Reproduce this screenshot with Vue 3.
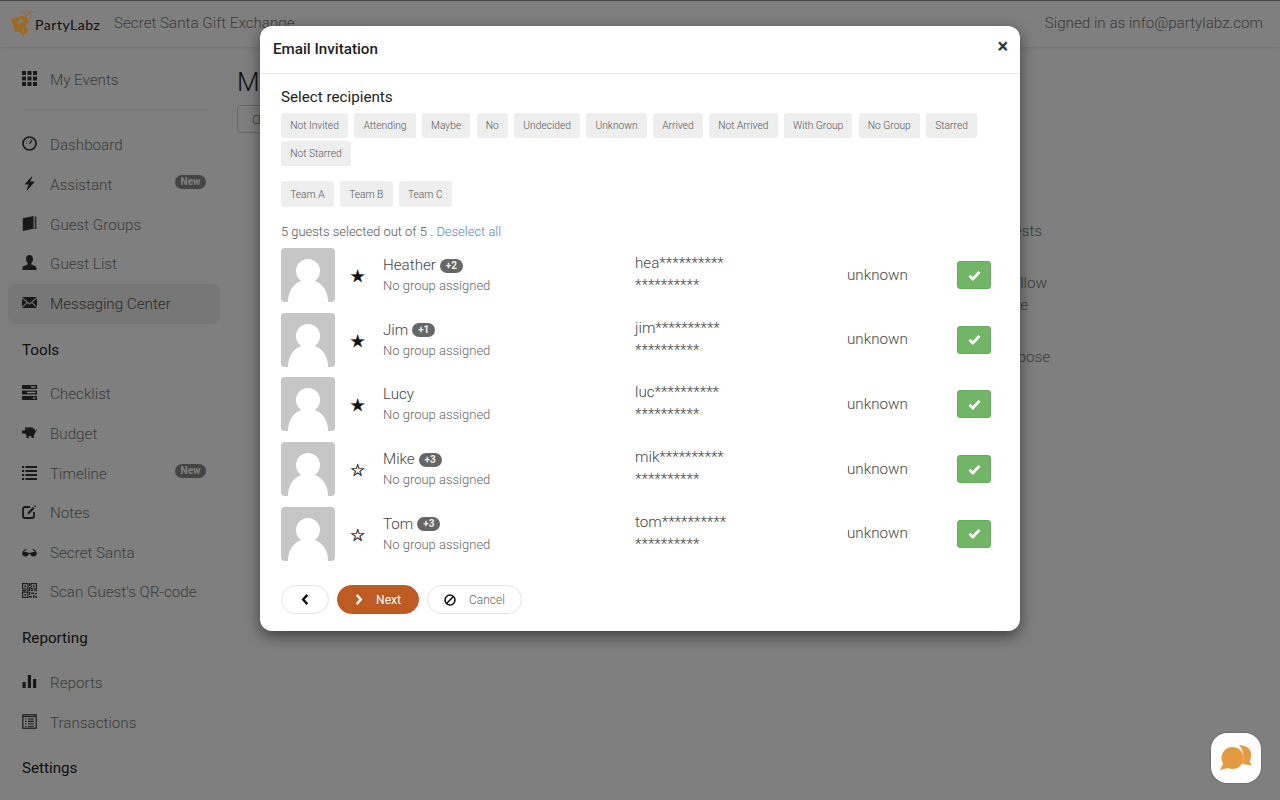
<script setup>
const nav = [
  { type: 'item', label: 'Dashboard', icon: 'dash' },
  { type: 'item', label: 'Assistant', icon: 'bolt', badge: 'New' },
  { type: 'item', label: 'Guest Groups', icon: 'book' },
  { type: 'item', label: 'Guest List', icon: 'user' },
  { type: 'item', label: 'Messaging Center', icon: 'mail', active: true },
  { type: 'head', label: 'Tools' },
  { type: 'item', label: 'Checklist', icon: 'tasks' },
  { type: 'item', label: 'Budget', icon: 'pig' },
  { type: 'item', label: 'Timeline', icon: 'list', badge: 'New' },
  { type: 'item', label: 'Notes', icon: 'edit' },
  { type: 'item', label: 'Secret Santa', icon: 'glasses' },
  { type: 'item', label: "Scan Guest's QR-code", icon: 'qr' },
  { type: 'head', label: 'Reporting' },
  { type: 'item', label: 'Reports', icon: 'bars' },
  { type: 'item', label: 'Transactions', icon: 'ledger' },
  { type: 'head', label: 'Settings' }
]
const filters = ['Not Invited', 'Attending', 'Maybe', 'No', 'Undecided', 'Unknown', 'Arrived', 'Not Arrived', 'With Group', 'No Group', 'Starred', 'Not Starred']
const teams = ['Team A', 'Team B', 'Team C']
const guests = [
  { name: 'Heather', plus: '+2', star: true, email: 'hea**********' },
  { name: 'Jim', plus: '+1', star: true, email: 'jim**********' },
  { name: 'Lucy', plus: '', star: true, email: 'luc**********' },
  { name: 'Mike', plus: '+3', star: false, email: 'mik**********' },
  { name: 'Tom', plus: '+3', star: false, email: 'tom**********' }
]
</script>

<template>
  <div class="page">
    <header class="topbar">
      <div class="brand">
        <svg class="logo" viewBox="0 0 24 28" width="24" height="28">
          <path fill="#9c6a22" d="M1 9.500 12 7c3.600-.6 6 1.400 6.200 4.600.2 3-1.600 5-4.600 5.600l-4.200.8L10 22l-5 1z" />
          <path fill="#7f7f7f" d="M7.600 11.400l3.600-.7c1.200-.2 2 .4 2.100 1.400.1 1.100-.6 1.800-1.700 2l-3.400.6z" />
          <circle cx="13.500" cy="21" r="4.400" fill="#9c6a22" />
          <path d="M13.500 25.400v2.400" stroke="#9c6a22" stroke-width="1" />
          <path d="M13.500 18.800v4.400" stroke="#7f7f7f" stroke-width="1" />
          <g fill="#9c6a22">
            <circle cx="11" cy="2" r="1" /><circle cx="14" cy="4" r="1" /><circle cx="17" cy="6" r="1.100" />
            <circle cx="20" cy="4" r="1.200" /><circle cx="16" cy="1.500" r=".7" /><circle cx="20" cy="9" r=".9" />
            <circle cx="23" cy="3" r=".8" /><circle cx="18" cy="11" r=".7" />
          </g>
        </svg>
        <span class="brand-name">PartyLabz</span>
      </div>
      <span class="event-name">Secret Santa Gift Exchange</span>
      <span class="signed">Signed in as info@partylabz.com</span>
    </header>

    <div class="shell">
      <aside class="sidebar">
        <div class="item">
          <svg class="ico" viewBox="0 0 15 15"><g fill="currentColor">
            <rect x="0" y="0" width="4" height="4" /><rect x="5.500" y="0" width="4" height="4" /><rect x="11" y="0" width="4" height="4" />
            <rect x="0" y="5.500" width="4" height="4" /><rect x="5.500" y="5.500" width="4" height="4" /><rect x="11" y="5.500" width="4" height="4" />
            <rect x="0" y="11" width="4" height="4" /><rect x="5.500" y="11" width="4" height="4" /><rect x="11" y="11" width="4" height="4" />
          </g></svg>
          <span>My Events</span>
        </div>
        <div class="divider"></div>
        <template v-for="n in nav" :key="n.label">
          <div v-if="n.type === 'head'" class="nav-head">{{ n.label }}</div>
          <div v-else class="item" :class="{ active: n.active }">
            <svg class="ico" viewBox="0 0 15 15">
              <g v-if="n.icon === 'dash'">
                <circle cx="7.500" cy="7.500" r="6.500" fill="none" stroke="currentColor" stroke-width="1.700" />
                <path d="M7.500 7.800 10 4.400" stroke="currentColor" stroke-width="1.300" fill="none" />
                <path d="M4 7h1M5.500 4.600h.8M8 3.600h.8" stroke="currentColor" stroke-width="1" fill="none" />
              </g>
              <path v-else-if="n.icon === 'bolt'" fill="currentColor" d="M10.500-.5 2.500 8.600h4L4.200 15.500 13 5.600H8.500z" />
              <g v-else-if="n.icon === 'book'" fill="currentColor">
                <path d="M.8 2.200 11.500 0v12.800L.8 15z" />
                <path d="M12.600.6h1.800v12.600h-1.800z" opacity=".8" />
              </g>
              <path v-else-if="n.icon === 'user'" fill="currentColor" d="M7.500 0C9.600 0 11 1.600 11 4c0 1.800-.8 3.400-1.700 4.300v1.200c1.900.8 5.200 1.600 5.200 3.500V15H.5v-2c0-1.900 3.300-2.700 5.200-3.500V8.300C4.800 7.400 4 5.800 4 4c0-2.400 1.400-4 3.500-4z" />
              <path v-else-if="n.icon === 'mail'" fill="currentColor" fill-rule="evenodd" d="M0 2h15L7.500 8.200zM0 3.600l4.600 3.700L0 11.700zM15 3.600v8.100l-4.600-4.400zM5.400 8l2.100 1.700L9.600 8l5.400 5H0z" />
              <g v-else-if="n.icon === 'tasks'" fill="currentColor">
                <path fill-rule="evenodd" d="M0 0h15v4H0zM9 1.300v1.400h4.500V1.300z" />
                <path fill-rule="evenodd" d="M0 5.500h15v4H0zM5 6.800v1.400h8.500V6.800z" />
                <path fill-rule="evenodd" d="M0 11h15v4H0zM11 12.300v1.400h2.500v-1.400z" />
              </g>
              <g v-else-if="n.icon === 'pig'" fill="currentColor">
                <ellipse cx="8" cy="6.800" rx="5.500" ry="4.500" />
                <rect x="4.500" y="9.500" width="2.300" height="3.500" />
                <rect x="9.500" y="9.500" width="2.300" height="3.500" />
                <path d="M0 5.500h3v3H0zM3 1.500 5.500 3 3.500 4.500zM13 6l2-1.800.4.4L13.500 7z" />
              </g>
              <g v-else-if="n.icon === 'list'" fill="currentColor">
                <rect x="0" y="1" width="2.200" height="2" /><rect x="3.500" y="1" width="11.500" height="2" />
                <rect x="0" y="5" width="2.200" height="2" /><rect x="3.500" y="5" width="11.500" height="2" />
                <rect x="0" y="9" width="2.200" height="2" /><rect x="3.500" y="9" width="11.500" height="2" />
                <rect x="0" y="13" width="2.200" height="2" /><rect x="3.500" y="13" width="11.500" height="2" />
              </g>
              <g v-else-if="n.icon === 'edit'">
                <path d="M8 3H3a2 2 0 0 0-2 2v7a2 2 0 0 0 2 2h7a2 2 0 0 0 2-2V8" fill="none" stroke="currentColor" stroke-width="1.800" />
                <path fill="currentColor" d="M5.500 10.500 6 8l5-5 1.600 1.600-5 5zM12.300 1.500h1.600v1.600h-1.600z" />
              </g>
              <g v-else-if="n.icon === 'glasses'" fill="currentColor">
                <path d="M.2 9.600C.2 7.500 2.500 5.200 4.200 5l.3 1C3.200 6.400 2.200 7.300 1.800 8.200c1.500-.3 3.800-.2 4.700.8v1.200c0 1.300-1 2.300-3 2.300S.2 11.200.2 9.600zM14.800 9.600C14.800 7.500 12.500 5.200 10.800 5l-.3 1c1.300.4 2.300 1.300 2.700 2.200-1.500-.3-3.800-.2-4.700.8v1.200c0 1.300 1 2.300 3 2.300s3.300-1.300 3.300-2.900z" />
                <rect x="6" y="8.800" width="3" height="1.200" />
              </g>
              <g v-else-if="n.icon === 'qr'">
                <g fill="none" stroke="currentColor" stroke-width="1.100">
                  <rect x=".6" y=".6" width="5.300" height="5.300" /><rect x="9.100" y=".6" width="5.300" height="5.300" /><rect x=".6" y="9.100" width="5.300" height="5.300" />
                </g>
                <g fill="currentColor">
                  <rect x="2.400" y="2.400" width="1.700" height="1.700" /><rect x="10.900" y="2.400" width="1.700" height="1.700" /><rect x="2.400" y="10.900" width="1.700" height="1.700" />
                  <rect x="7" y="0" width="1.200" height="3" /><rect x="7" y="4" width="1.200" height="3" /><rect x="0" y="7" width="4" height="1.200" /><rect x="5" y="7" width="3" height="1.200" />
                  <rect x="9" y="7" width="2" height="1.200" /><rect x="12.500" y="7" width="2.500" height="1.200" /><rect x="7" y="9" width="1.200" height="3" /><rect x="9" y="9.500" width="3" height="1.200" />
                  <rect x="12.500" y="10" width="2.500" height="1.200" /><rect x="7" y="13" width="3" height="1.500" /><rect x="11" y="12" width="1.400" height="3" /><rect x="13.500" y="13" width="1.500" height="2" />
                </g>
              </g>
              <g v-else-if="n.icon === 'bars'" fill="currentColor">
                <rect x=".5" y="8" width="3.200" height="6" /><rect x="5.800" y="1" width="3.200" height="13" /><rect x="11" y="5" width="3.200" height="9" />
              </g>
              <g v-else-if="n.icon === 'ledger'">
                <rect x=".8" y=".8" width="13.400" height="13.400" fill="none" stroke="currentColor" stroke-width="1.200" />
                <path d="M1 2.600h13" stroke="currentColor" stroke-width="1" />
                <path d="M3 5h1.500M6 5h6M3 7.400h1.500M6 7.400h6M3 9.800h1.500M6 9.800h6M3 12.200h1.500M6 12.200h6" stroke="currentColor" stroke-width="1.100" fill="none" />
              </g>
            </svg>
            <span>{{ n.label }}</span>
            <span v-if="n.badge" class="new">{{ n.badge }}</span>
          </div>
        </template>
      </aside>

      <main class="main">
        <h1 class="title">Messaging Center</h1>
        <button class="outline">Options</button>
        <div class="note">
          <p class="n1">Invite your guests</p>
          <p class="n2">and follow</p>
          <p class="n3">up here</p>
          <p class="n4">for this purpose</p>
        </div>
      </main>
    </div>

    <div class="overlay">
      <section class="modal">
        <div class="m-head">
          <h2>Email Invitation</h2>
          <span class="close">×</span>
        </div>
        <div class="m-body">
          <h3>Select recipients</h3>
          <div class="chips">
            <span v-for="f in filters" :key="f" class="chip">{{ f }}</span>
          </div>
          <div class="chips teams">
            <span v-for="t in teams" :key="t" class="chip">{{ t }}</span>
          </div>
          <p class="status">5 guests selected out of 5 . <a>Deselect all</a></p>
          <ul class="guests">
            <li v-for="g in guests" :key="g.name" class="guest">
              <svg class="avatar" viewBox="0 0 54 54" width="54" height="54">
                <rect width="54" height="54" rx="4" fill="#c6c6c6" />
                <circle cx="27" cy="23" r="12" fill="#fff" />
                <path fill="#fff" d="M7 54c0-13 8-22 20-22s20 9 20 22z" />
              </svg>
              <span class="star">{{ g.star ? '★' : '☆' }}</span>
              <div class="who">
                <div class="name">{{ g.name }}<span v-if="g.plus" class="plus">{{ g.plus }}</span></div>
                <div class="group">No group assigned</div>
              </div>
              <div class="contact">
                <div class="mail">{{ g.email }}</div>
                <div class="phone">**********</div>
              </div>
              <span class="state">unknown</span>
              <span class="check">
                <svg viewBox="0 0 14 12" width="13" height="11"><path d="M1.500 6.200 5.200 9.800 12.500 2" fill="none" stroke="#fff" stroke-width="3" /></svg>
              </span>
            </li>
          </ul>
          <div class="actions">
            <button class="btn back">
              <svg viewBox="0 0 8 12" width="8" height="11"><path d="M6.500 1 2 6l4.500 5" fill="none" stroke="#111" stroke-width="2.600" /></svg>
            </button>
            <button class="btn next">
              <svg viewBox="0 0 8 12" width="8" height="11"><path d="M1.500 1 6 6l-4.500 5" fill="none" stroke="#fff" stroke-width="2.600" /></svg>
              <span>Next</span>
            </button>
            <button class="btn cancel">
              <svg viewBox="0 0 14 14" width="12" height="12"><circle cx="7" cy="7" r="5.800" fill="none" stroke="#111" stroke-width="1.800" /><path d="M3 11 11 3" stroke="#111" stroke-width="1.800" /></svg>
              <span>Cancel</span>
            </button>
          </div>
        </div>
      </section>
    </div>

    <div class="chat">
      <svg viewBox="0 0 34 26" width="34" height="26">
        <path fill="#e59a3f" d="M16 1c5 0 10 2.500 11.500 6 1 4 .5 7.500-1 10.500l2.500 4-8-1.200c-.8-.2-1.200-.3-2-.5 3-6 1-15-3-18.800z" transform="translate(4 -1)" />
        <circle cx="13.500" cy="13" r="11" fill="#e59a3f" />
        <path fill="#e59a3f" d="M5 17 1 25l10-2.500z" />
      </svg>
    </div>
  </div>
</template>

<style>
html, body { margin: 0; background: #fff; }
</style>

<style scoped>
.page {
  position: relative;
  width: 1280px;
  height: 800px;
  overflow: hidden;
  background: #fff;
  font-family: Roboto, "Liberation Sans", sans-serif;
  font-weight: 300;
  color: #777;
}
.topbar {
  height: 47px;
  box-sizing: border-box;
  display: flex;
  align-items: center;
  padding: 0 17px 2px 10px;
  border-top: 1px solid #888;
  box-shadow: 0 1px 3px rgba(0, 0, 0, .12);
  font-size: 15.200px;
  color: #777;
}
.brand { display: flex; align-items: center; width: 104px; }
.logo { flex: none; position: relative; z-index: 1; }
.brand-name {
  margin-left: 1px;
  margin-top: 3px;
  font-family: Lato, sans-serif;
  font-weight: 400;
  font-size: 14px;
  letter-spacing: .55px;
  color: #222;
}
.signed { margin-left: auto; }
.shell { display: flex; }
.sidebar { width: 220px; flex: none; padding: 13px 0 0 8px; box-sizing: border-box; }
.item {
  height: 39.600px;
  display: flex;
  align-items: center;
  padding: 0 14px;
  border-radius: 8px;
  font-size: 15.200px;
  color: #777;
}
.item.active { background: #eee; color: #555; }
.ico { width: 15px; height: 15px; margin-right: 13px; flex: none; color: #333; margin-top: -3px; }
.divider { height: 1px; background: #f0f0f0; margin: 9px 10px 16px 14px; }
.nav-head {
  height: 51px;
  line-height: 52px;
  padding-left: 14px;
  font-size: 15.200px;
  font-weight: 400;
  color: #222;
}
.new {
  margin-left: auto;
  margin-top: -5px;
  width: 31px;
  height: 14px;
  line-height: 14px;
  border-radius: 7px;
  background: #888;
  color: #fff;
  font-size: 10px;
  font-weight: 700;
  text-align: center;
}
.main { flex: 1; padding: 20px 0 0 17px; }
.title { margin: 0; font-size: 26px; line-height: 30px; font-weight: 300; color: #222; white-space: nowrap; }
.outline {
  display: block;
  margin-top: 8px;
  height: 28px;
  padding: 0 14px;
  background: #fff;
  border: 1px solid #ccc;
  border-radius: 4px;
  font: 300 13px Roboto, sans-serif;
  color: #777;
}
.note { width: 300px; margin: 87px 0 0 513px; font-size: 15.200px; line-height: 22px; text-align: right; color: #777; }
.note p { margin: 0; }
.n1 { padding-right: 8px; margin-bottom: 30px !important; }
.n2 { padding-right: 3px; }
.n3 { padding-right: 22px; margin-bottom: 30px !important; }
.overlay {
  position: absolute;
  inset: 0;
  background: rgba(0, 0, 0, .5);
  display: flex;
  justify-content: center;
  align-items: flex-start;
}
.modal {
  width: 760px;
  margin-top: 26px;
  background: #fff;
  border-radius: 12px;
  box-shadow: 0 5px 15px rgba(0, 0, 0, .5);
}
.m-head {
  height: 48px;
  box-sizing: border-box;
  border-bottom: 1px solid #e8e8e8;
  display: flex;
  align-items: center;
  justify-content: space-between;
  padding: 0 12px 0 13px;
}
.m-head h2 { margin: 0 0 1px; font-size: 15.200px; font-weight: 500; color: #222; }
.close { font-size: 20px; font-weight: 700; color: #333; line-height: 1; margin-top: -8px; }
.m-body { padding: 13px 29px 17px 21px; }
.m-body h3 { margin: 0; font-size: 15.200px; line-height: 20px; font-weight: 400; color: #222; }
.chips { display: flex; flex-wrap: wrap; gap: 3px 6.200px; margin-top: 6px; }
.teams { margin-top: 15px; }
.chip {
  height: 25px;
  line-height: 26px;
  padding: 0 9.200px;
  background: #eee;
  border-radius: 3px;
  font-size: 10.240px;
  color: #555;
}
.teams .chip { height: 26px; line-height: 27px; }
.status { margin: 15px 0 6px; font-size: 12.950px; line-height: 20px; color: #555; }
.status a { color: #5b84c4; }
.guests { list-style: none; margin: 0; padding: 0; display: flex; flex-direction: column; gap: 10.700px; }
.guest {
  display: grid;
  grid-template-columns: 54px 48px 252px 212px 110px 34px;
  align-items: center;
  height: 54px;
}
.avatar { display: block; }
.star {
  font-size: 17px;
  color: #111;
  justify-self: center;
  font-family: "DejaVu Sans", sans-serif;
  margin-top: 2px;
  margin-left: -3px;
  -webkit-text-stroke: .35px #111;
}
.name { font-size: 15.200px; line-height: 21px; color: #444; display: flex; align-items: center; margin-top: 1px; }
.plus {
  margin-left: 4px;
  width: 23px;
  height: 14px;
  line-height: 14px;
  border-radius: 7px;
  background: #666;
  color: #eee;
  font-size: 10px;
  font-weight: 700;
  text-align: center;
}
.group { font-size: 13px; line-height: 20px; color: #666; }
.contact { color: #444; }
.mail { font-size: 15.200px; line-height: 20px; margin-top: -2px; }
.phone { font-size: 15.200px; line-height: 20px; margin-top: 2px; }
.state { font-size: 15.200px; color: #444; margin-top: -1px; }
.check {
  width: 34px;
  height: 28px;
  box-sizing: border-box;
  border: 1px solid #5fb058;
  border-radius: 3px;
  background: #73b566;
  display: flex;
  align-items: center;
  justify-content: center;
}
.actions { display: flex; gap: 8px; margin-top: 24.400px; }
.btn {
  height: 29px;
  box-sizing: border-box;
  border-radius: 15px;
  border: 1px solid #e4e4e4;
  background: #fff;
  font: 300 12px Roboto, sans-serif;
  color: #666;
  display: flex;
  align-items: center;
  justify-content: center;
  padding: 0;
}
.back { width: 48px; }
.next { width: 82px; background: #bd5b22; border-color: #c9541c; color: #fff; gap: 13px; font-weight: 400; }
.cancel { width: 95px; gap: 13px; }
.chat {
  position: absolute;
  left: 1211px;
  top: 733px;
  width: 50px;
  height: 50px;
  border-radius: 16px;
  background: #fff;
  box-shadow: 0 0 2px rgba(0, 0, 0, .4);
  display: flex;
  align-items: center;
  justify-content: center;
}
</style>
